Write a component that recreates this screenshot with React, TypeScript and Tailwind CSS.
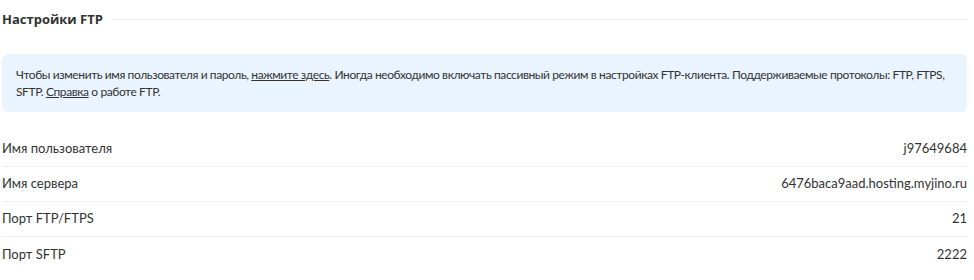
const ROWS: Array<{ label: string; value: string }> = [
  { label: 'Имя пользователя', value: 'j97649684' },
  { label: 'Имя сервера', value: '6476baca9aad.hosting.myjino.ru' },
  { label: 'Порт FTP/FTPS', value: '21' },
  { label: 'Порт SFTP', value: '2222' },
]

export default function App() {
  return (
    <div className="h-[280px] w-[974px] overflow-hidden bg-white pl-[2px] pr-[7px] font-['Lato',sans-serif] text-[#333]">
      <div className="flex items-center gap-[10px] pt-[9px]">
        <h2 className="font-['Open_Sans',sans-serif] text-[13px] font-bold leading-[20px] text-[#333]">
          Настройки FTP
        </h2>
        <div className="h-px flex-1 bg-[#eceef0]" />
      </div>

      <div className="mt-[25px] rounded-[6px] bg-[#eaf4fe] px-[14px] py-[12px] text-[12px] leading-[17px] tracking-[-0.4px]">
        Чтобы изменить имя пользователя и пароль, <span className="underline">нажмите здесь</span>. Иногда
        необходимо включать пассивный режим в настройках FTP-клиента. Поддерживаемые протоколы: FTP, FTPS, SFTP.{' '}
        <span className="underline">Справка</span> о работе FTP.
      </div>

      <div className="mt-[20px]">
        {ROWS.map((row, i) => (
          <div
            key={row.label}
            className={`flex h-[35px] items-center justify-between text-[13px] ${
              i < ROWS.length - 1 ? 'border-b border-[#eef0f2]' : ''
            }`}
          >
            <span>{row.label}</span>
            <span>{row.value}</span>
          </div>
        ))}
      </div>
    </div>
  )
}
